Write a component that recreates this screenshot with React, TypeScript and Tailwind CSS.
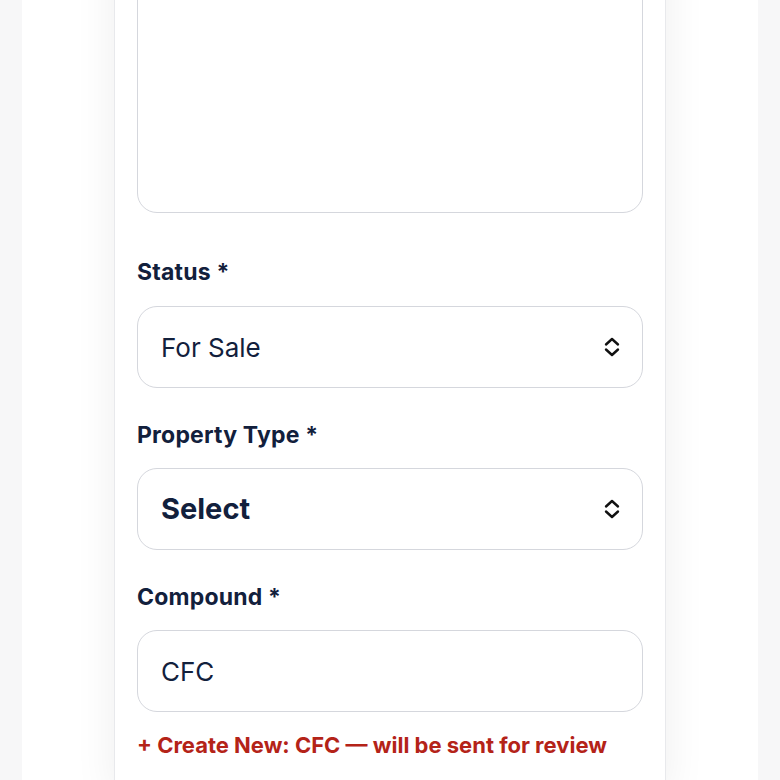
const navy = 'text-[#12203c]';

function UpDown() {
  return (
    <svg width="16" height="22" viewBox="0 0 16 22" fill="none" stroke="#111" strokeWidth="2.4" strokeLinecap="round" strokeLinejoin="round">
      <path d="M2 8.5 8 3l6 5.5" />
      <path d="M2 13.5 8 19l6-5.5" />
    </svg>
  );
}

function Label({ children }: { children: React.ReactNode }) {
  return <p className={`text-[23px] font-bold leading-none tracking-[0.2px] ${navy}`}>{children}</p>;
}

function SelectBox({ value, bold }: { value: string; bold?: boolean }) {
  return (
    <div className="flex h-[82px] items-center justify-between rounded-[20px] border-[1.5px] border-[#d5d7dd] bg-white pl-[23px] pr-[22px]">
      <span className={`${bold ? 'text-[29px] font-bold' : 'text-[26px] font-normal'} ${navy}`}>{value}</span>
      <UpDown />
    </div>
  );
}

export default function App() {
  return (
    <div className="h-[780px] overflow-hidden bg-[#f7f7f8] px-[22px]" style={{ fontFamily: 'Inter, "Noto Sans", sans-serif' }}>
      <div className="flex h-full flex-col bg-white">
        <div className="mx-auto -mt-[60px] w-[552px] border-x border-[#e8e9ec] bg-white px-[22px] pb-10 shadow-[0_0_40px_rgba(0,0,0,0.07)]">
          <div className="h-[273px] rounded-[20px] border-[1.5px] border-[#d5d7dd]" />

          <div className="mt-[48px]">
            <Label>Status *</Label>
          </div>
          <div className="mt-[22px]">
            <SelectBox value="For Sale" />
          </div>

          <div className="mt-[36px]">
            <Label>Property Type *</Label>
          </div>
          <div className="mt-[21px]">
            <SelectBox value="Select" bold />
          </div>

          <div className="mt-[36px]">
            <Label>Compound *</Label>
          </div>
          <div className="mt-[21px] flex h-[82px] items-center rounded-[20px] border-[1.5px] border-[#d5d7dd] pl-[23px]">
            <span className={`text-[26px] ${navy}`}>CFC</span>
          </div>

          <p className="mt-[22px] text-[22px] font-bold leading-none text-[#b42318]">
            + Create New: CFC — will be sent for review
          </p>
        </div>
      </div>
    </div>
  );
}
